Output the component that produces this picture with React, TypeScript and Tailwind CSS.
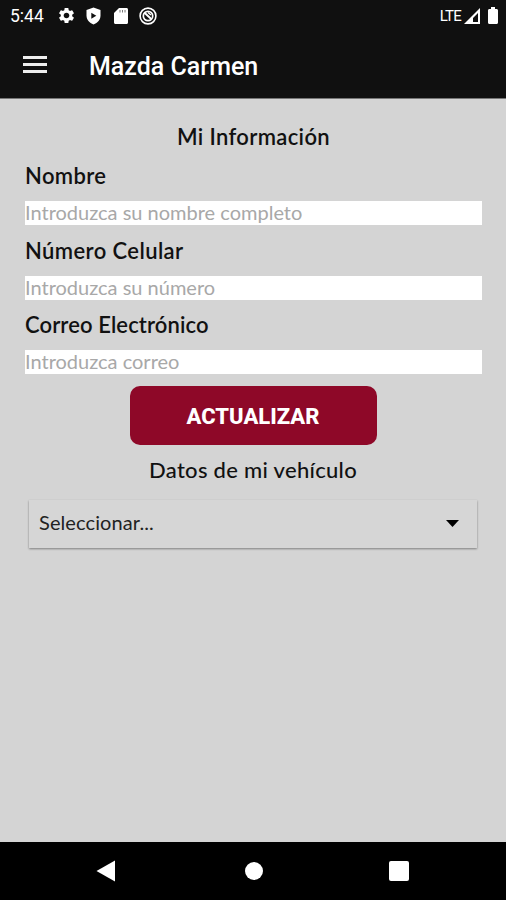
import { MdSettings } from "react-icons/md";

const FIELDS = [
  { label: "Nombre", placeholder: "Introduzca su nombre completo", spacing: "tracking-[0.35px]" },
  { label: "Número Celular", placeholder: "Introduzca su número", spacing: "tracking-[0.4px]" },
  { label: "Correo Electrónico", placeholder: "Introduzca correo", spacing: "tracking-[0.1px]" },
];

function StatusBar() {
  return (
    <div className="flex h-8 items-center pl-[10px] pr-[8px] text-white">
      <span className="mt-px w-[47px] font-['Roboto',sans-serif] text-[17.5px] leading-none">5:44</span>
      <MdSettings className="-mt-px size-[19px]" />

      {/* Escudo */}
      <svg className="ml-[9px] h-[18px] w-[17px]" viewBox="0 0 16 18">
        <path fill="#fff" d="M8 .5 15 3v5.4c0 4-2.8 7.5-7 9-4.2-1.5-7-5-7-9V3z" />
        <path fill="#101010" d="M5.8 5.8 10.8 8.8 5.8 11.8z" />
      </svg>

      {/* Tarjeta SD */}
      <svg className="ml-3 h-4 w-[14px]" viewBox="0 0 14 16">
        <path fill="#fff" d="M5 0h7.5C13.4 0 14 .6 14 1.5v13c0 .9-.6 1.5-1.5 1.5h-11C.6 16 0 15.400 0 14.5V5z" />
        <path stroke="#777" strokeWidth="1" d="M6 2v2.5M8.5 2v2.5M11 2v2.5" />
      </svg>

      {/* Ahorro de datos */}
      <svg className="ml-[11px] size-[18px]" viewBox="0 0 18 18" fill="none" stroke="#fff">
        <circle cx="9" cy="9" r="7.9" strokeWidth="1.6" />
        <circle cx="9" cy="9" r="4.7" strokeWidth="1.7" />
        <path strokeWidth="2" d="m5.5 5.8 7 6.4" />
        <path strokeWidth="1.5" d="M9 5.5 12 8" />
      </svg>

      <span className="ml-auto font-['Roboto',sans-serif] text-[15px] leading-none tracking-[-0.8px]">LTE</span>
      <svg className="ml-[3px] size-4" viewBox="0 0 16 16">
        <path fill="#fff" fillRule="evenodd" d="M16 0v16H0zM14 5 9 10v4h5z" />
      </svg>
      <svg className="-mt-px ml-[8px] h-[17px] w-[10px]" viewBox="0 0 10 17">
        <path fill="#fff" d="M3 0h4v2h1.5C9.4 2 10 2.6 10 3.5v12c0 .9-.6 1.5-1.5 1.5h-7C.6 17 0 16.400 0 15.5v-12C0 2.6.6 2 1.5 2H3z" />
      </svg>
    </div>
  );
}

function NavBar() {
  return (
    <nav className="flex h-[58px] items-center bg-black px-[96px]">
      <button aria-label="Atrás">
        <svg className="h-[22px] w-[19px]" viewBox="0 0 19 22">
          <path fill="#fff" d="M.5 11 19 .5v21z" />
        </svg>
      </button>
      <button aria-label="Inicio" className="ml-[129.5px] size-[18px] rounded-full bg-white" />
      <button aria-label="Recientes" className="ml-auto mr-px size-5 rounded-[2px] bg-white" />
    </nav>
  );
}

export default function App() {
  return (
    <div className="flex h-[900px] w-[506px] flex-col overflow-hidden bg-[#d4d4d4] font-['Lato',sans-serif]">
      <header className="h-[99px] shrink-0 border-b border-[#777] bg-[#101010]">
        <StatusBar />
        <div className="flex h-[66px] items-center pl-[23px]">
          <button aria-label="Menú" className="mb-px flex w-6 flex-col gap-[4px]">
            <span className="h-[3px] bg-[#eee]" />
            <span className="h-[3px] bg-[#eee]" />
            <span className="h-[3px] bg-[#eee]" />
          </button>
          <h1 className="ml-[42px] mt-[2px] font-['Roboto',sans-serif] text-[25px] font-medium leading-none text-white">Mazda Carmen</h1>
        </div>
      </header>

      <main className="flex flex-1 flex-col px-[25px] pt-[23px] text-[#111]">
        <h2 className="pl-px text-center text-[22px] font-semibold leading-[30px] tracking-[0.35px]">Mi Información</h2>

        {FIELDS.map((f) => (
          <label key={f.label} className="flex h-[74.6px] flex-col pt-[9px]">
            <span className={`text-[22px] font-semibold leading-[30px] ${f.spacing}`}>{f.label}</span>
            <input
              className="mt-[10px] h-6 w-[457px] bg-white p-0 pb-[2px] text-[20px] leading-[22px] outline-none placeholder:text-[#a8a8a8]"
              placeholder={f.placeholder}
            />
          </label>
        ))}

        <button className="mt-[10px] h-[59px] w-[247px] self-center rounded-[10px] bg-[#8e0828] pt-[2px] font-['Roboto',sans-serif] text-[22px] font-extrabold text-white">
          ACTUALIZAR
        </button>

        <h2 className="mt-[10px] text-center text-[22px] font-medium leading-[30px] tracking-[0.3px]">Datos de mi vehículo</h2>

        <button className="mx-1 mt-[15px] flex h-12 items-center justify-between bg-[#d6d6d6] pl-[10px] pr-[18px] text-[20px] tracking-[0.1px] text-[#222] shadow-[0_1px_2px_rgba(0,0,0,0.4)]">
          <span className="mb-[3px]">Seleccionar...</span>
          <svg className="h-[7px] w-[13px]" viewBox="0 0 13 7">
            <path fill="#000" d="M0 0h13L6.5 7z" />
          </svg>
        </button>
      </main>

      <NavBar />
    </div>
  );
}
